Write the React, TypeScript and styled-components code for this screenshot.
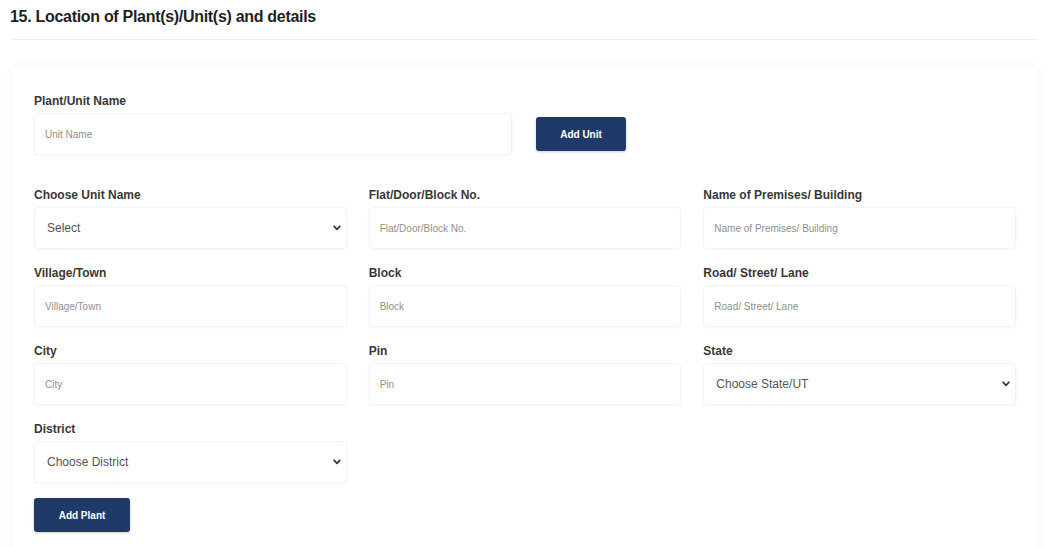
import styled, { createGlobalStyle } from 'styled-components';

const GlobalStyle = createGlobalStyle`
  body {
    margin: 0;
    background: #ffffff;
    font-family: "Liberation Sans", Arial, sans-serif;
    color: #2b2b2b;
  }
`;

const Page = styled.div`
  padding: 7px 11px 0 10px;
  height: 547px;
  overflow: hidden;
  box-sizing: border-box;
`;

const Title = styled.h5`
  margin: 0;
  font-size: 16px;
  font-weight: 700;
  line-height: 19px;
  color: #1f1f1f;
  letter-spacing: -0.3px;
`;

const Divider = styled.hr`
  margin: 13px 0 27px;
  border: 0;
  border-top: 1px solid #efefef;
`;

const Card = styled.div`
  margin-left: 2px;
  background: #fff;
  border-radius: 4px;
  box-shadow: 0 0 9px rgba(0, 0, 0, 0.06);
  padding: 27px 21px 30px 22px;
`;

const UnitRow = styled.div`
  display: flex;
  align-items: flex-end;
  gap: 24px;
  margin-bottom: 33px;
`;

const Field = styled.div<{ $width?: number }>`
  display: flex;
  flex-direction: column;
  width: ${(p) => (p.$width ? `${p.$width}px` : 'auto')};
`;

const Label = styled.label`
  font-size: 12px;
  font-weight: 700;
  line-height: 14px;
  color: #383838;
  margin-bottom: 5px;
`;

const TextInput = styled.input`
  height: 42px;
  box-sizing: border-box;
  border: 1px solid #f4f4f4;
  border-radius: 4px;
  box-shadow: 0 1px 3px rgba(0, 0, 0, 0.035);
  padding: 0 10px;
  font-family: inherit;
  font-size: 10px;
  color: #333;
  outline: none;
  &::placeholder {
    color: #8f8f8f;
  }
`;

const SelectWrap = styled.div`
  position: relative;
  height: 42px;
`;

const Select = styled.select`
  width: 100%;
  height: 42px;
  box-sizing: border-box;
  appearance: none;
  border: 1px solid #f4f4f4;
  border-radius: 4px;
  box-shadow: 0 1px 3px rgba(0, 0, 0, 0.035);
  background: #fff;
  padding: 0 12px;
  font-family: inherit;
  font-size: 12px;
  color: #555;
  outline: none;
`;

const Chevron = styled.svg`
  position: absolute;
  right: 6px;
  top: 18px;
  width: 8px;
  height: 6px;
  pointer-events: none;
`;

const Grid = styled.div`
  display: grid;
  grid-template-columns: repeat(3, 1fr);
  column-gap: 22px;
  row-gap: 17px;
`;

const Button = styled.button<{ $width: number }>`
  width: ${(p) => p.$width}px;
  height: 34px;
  border: 0;
  border-radius: 3px;
  background: #1f3a68;
  color: #fff;
  font-family: inherit;
  font-size: 10px;
  font-weight: 700;
  box-shadow: 0 1px 3px rgba(0, 0, 0, 0.2);
  cursor: pointer;
`;

const UnitButton = styled(Button)`
  margin-bottom: 4px;
`;

const PlantButton = styled(Button)`
  margin-top: 15px;
`;

function ChevronDown(): JSX.Element {
  return (
    <Chevron viewBox="0 0 8 6">
      <path d="M1.2 1.3 L4 4.3 L6.8 1.3" fill="none" stroke="#3a3a3a" strokeWidth="1.8" strokeLinecap="round" strokeLinejoin="round" />
    </Chevron>
  );
}

type FieldDef = { label: string; placeholder: string; select?: boolean };

const fields: FieldDef[] = [
  { label: 'Choose Unit Name', placeholder: 'Select', select: true },
  { label: 'Flat/Door/Block No.', placeholder: 'Flat/Door/Block No.' },
  { label: 'Name of Premises/ Building', placeholder: 'Name of Premises/ Building' },
  { label: 'Village/Town', placeholder: 'Village/Town' },
  { label: 'Block', placeholder: 'Block' },
  { label: 'Road/ Street/ Lane', placeholder: 'Road/ Street/ Lane' },
  { label: 'City', placeholder: 'City' },
  { label: 'Pin', placeholder: 'Pin' },
  { label: 'State', placeholder: 'Choose State/UT', select: true },
  { label: 'District', placeholder: 'Choose District', select: true },
];

function App(): JSX.Element {
  return (
    <>
      <GlobalStyle />
      <Page>
        <Title>15. Location of Plant(s)/Unit(s) and details</Title>
        <Divider />
        <Card>
          <UnitRow>
            <Field $width={478}>
              <Label>Plant/Unit Name</Label>
              <TextInput placeholder="Unit Name" />
            </Field>
            <UnitButton $width={90} type="button">
              Add Unit
            </UnitButton>
          </UnitRow>
          <Grid>
            {fields.map((f) => (
              <Field key={f.label}>
                <Label>{f.label}</Label>
                {f.select ? (
                  <SelectWrap>
                    <Select defaultValue="">
                      <option value="">{f.placeholder}</option>
                    </Select>
                    <ChevronDown />
                  </SelectWrap>
                ) : (
                  <TextInput placeholder={f.placeholder} />
                )}
              </Field>
            ))}
          </Grid>
          <PlantButton $width={96} type="button">
            Add Plant
          </PlantButton>
        </Card>
      </Page>
    </>
  );
}

export default App;
